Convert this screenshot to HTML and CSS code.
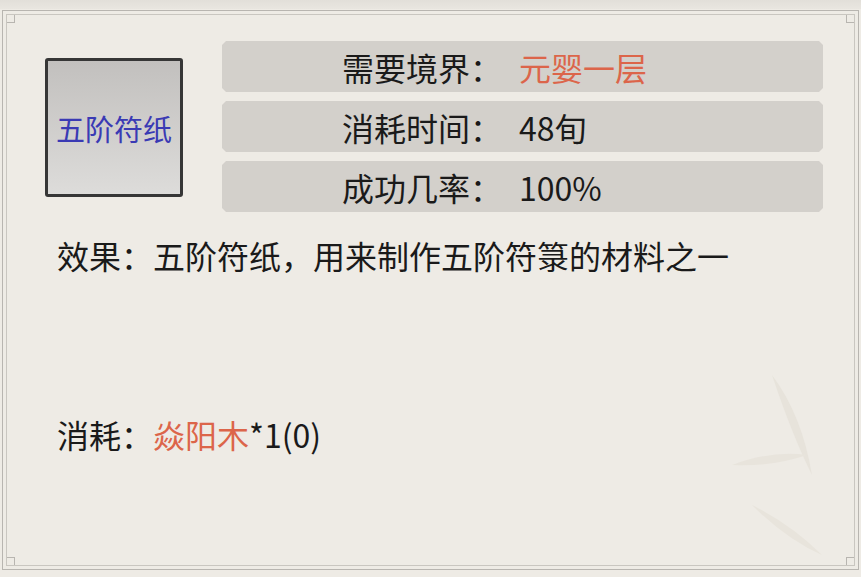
FILE: index.html
```html
<!DOCTYPE html>
<html lang="zh">
<head>
<meta charset="utf-8">
<link rel="stylesheet" href="styles.css">
</head>
<body>
<div class="topband"></div>
<div class="frame">
  <span class="corner tl"></span><span class="corner tr"></span><span class="corner bl"></span><span class="corner br"></span>
  <div class="inner">
    <svg class="leaves" width="120" height="200" viewBox="0 0 120 200">
      <path d="M40 20 Q70 60 80 120 Q60 80 40 20Z" fill="#e7e3db"/>
      <path d="M0 110 Q40 95 75 100 Q40 112 0 110Z" fill="#e8e4dc"/>
      <path d="M20 150 Q60 170 90 200 Q55 185 20 150Z" fill="#e8e4dc"/>
    </svg>
    <div class="top">
      <div class="item-icon"><span>五阶符纸</span></div>
      <div class="rows">
        <div class="row"><span class="label">需要境界：</span><span class="value red">元婴一层</span></div>
        <div class="row"><span class="label">消耗时间：</span><span class="value">48旬</span></div>
        <div class="row"><span class="label">成功几率：</span><span class="value">100%</span></div>
      </div>
    </div>
    <p class="effect">效果：五阶符纸，用来制作五阶符箓的材料之一</p>
    <p class="cost">消耗：<span class="red">焱阳木</span>*1(0)</p>
  </div>
</div>
</body>
</html>
```
FILE: styles.css
```css
html, body {
  margin: 0;
  padding: 0;
}
body {
  width: 861px;
  height: 577px;
  overflow: hidden;
  background: #eeebe5;
  font-family: "Noto Sans CJK SC", "Noto Sans", sans-serif;
  color: #1a1a1a;
  position: relative;
}
.topband {
  position: absolute;
  left: 0;
  top: 0;
  width: 861px;
  height: 9px;
  background: linear-gradient(#e2dfd9, #e9e6e0);
}
.frame {
  position: relative;
  margin: 10px 2px 0 2px;
  height: 560px;
  box-sizing: border-box;
  border: 1px solid #b8b5b0;
  padding: 3px;
}
.corner {
  position: absolute;
  width: 8px;
  height: 8px;
  border: 1px solid #b8b5b0;
  background: #eeebe5;
}
.corner.tl { left: 3px; top: 3px; border-top: none; border-left: none; }
.corner.tr { right: 3px; top: 3px; border-top: none; border-right: none; }
.corner.bl { left: 3px; bottom: 3px; border-bottom: none; border-left: none; }
.corner.br { right: 3px; bottom: 3px; border-bottom: none; border-right: none; }
.inner {
  position: relative;
  height: 100%;
  box-sizing: border-box;
  border: 1px solid #c9c6c0;
  padding: 26px 0 0 0;
}
.leaves {
  position: absolute;
  right: 2px;
  bottom: 10px;
}
.top {
  display: flex;
  align-items: flex-start;
  padding-left: 38px;
}
.item-icon {
  margin-top: 17px;
  width: 138px;
  height: 139px;
  box-sizing: border-box;
  border: 3px solid #363636;
  border-radius: 3px;
  background: linear-gradient(#c2c0be, #dddcda);
  display: flex;
  align-items: center;
  justify-content: center;
}
.item-icon span {
  font-size: 29px;
  color: #3a3ab4;
}
.rows {
  margin-left: 39px;
  width: 601px;
  display: flex;
  flex-direction: column;
  gap: 9px;
}
.row {
  height: 51px;
  background: #d3d0cb;
  clip-path: polygon(4px 0, calc(100% - 4px) 0, 100% 4px, 100% calc(100% - 4px), calc(100% - 4px) 100%, 4px 100%, 0 calc(100% - 4px), 0 4px);
  display: flex;
  align-items: center;
  padding-left: 120px;
  font-size: 32px;
}
.label {
  width: 177px;
}
.red {
  color: #dc654a;
}
.effect {
  margin: 21px 0 0 50px;
  font-size: 32px;
  line-height: 44px;
}
.cost {
  margin: 135px 0 0 50px;
  font-size: 32px;
  line-height: 44px;
}
```
